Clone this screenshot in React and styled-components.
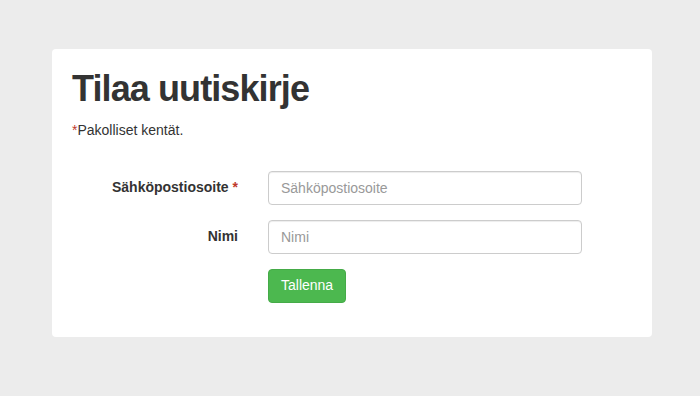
import React from "react";
import styled, { createGlobalStyle } from "styled-components";

const Global = createGlobalStyle`
  html, body { margin: 0; padding: 0; }
  body {
    background: #ececec;
    font-family: "Liberation Sans", Arial, Helvetica, sans-serif;
    font-size: 14px;
    line-height: 1.42857;
    color: #333;
  }
  * { box-sizing: border-box; }
`;

const Page = styled.div`
  width: 700px;
  height: 396px;
  padding: 49px 48px 0 52px;
`;

const Card = styled.div`
  width: 600px;
  background: #fff;
  border-radius: 4px;
  padding: 20px 20px 19px;
`;

const Title = styled.h1`
  margin: 0 0 12px;
  font-size: 36px;
  line-height: 1.1;
  font-weight: 700;
  letter-spacing: -0.9px;
  color: #333;
`;

const Note = styled.p`
  margin: 0;
`;

const Req = styled.span`
  color: #c0392b;
`;

const Form = styled.form`
  margin: 30px -15px 0;
`;

const Row = styled.div`
  display: grid;
  grid-template-columns: 196px 344px 1fr;
  margin-bottom: 15px;
`;

const Label = styled.label`
  grid-column: 1;
  padding: 7px 15px 0;
  text-align: right;
  font-weight: 700;
`;

const Field = styled.div`
  grid-column: 2;
  padding: 0 15px;
`;

const Input = styled.input`
  display: block;
  width: 100%;
  height: 34px;
  padding: 6px 12px;
  font: inherit;
  font-size: 14px;
  color: #555;
  background: #fff;
  border: 1px solid #ccc;
  border-radius: 4px;
  box-shadow: inset 0 1px 1px rgba(0, 0, 0, 0.075);
  outline: none;
  &::placeholder { color: #999; }
`;

const Button = styled.button`
  display: inline-block;
  height: 34px;
  padding: 6px 12px;
  font: inherit;
  font-size: 14px;
  color: #fff;
  background: #4cb84f;
  border: 1px solid #45ab48;
  border-radius: 4px;
  cursor: pointer;
`;

export default function App() {
  return (
    <>
      <Global />
      <Page>
        <Card>
          <Title>Tilaa uutiskirje</Title>
          <Note><Req>*</Req>Pakolliset kentät.</Note>
          <Form onSubmit={(e) => e.preventDefault()}>
            <Row>
              <Label htmlFor="email">Sähköpostiosoite <Req>*</Req></Label>
              <Field><Input id="email" type="email" placeholder="Sähköpostiosoite" /></Field>
            </Row>
            <Row>
              <Label htmlFor="name">Nimi</Label>
              <Field><Input id="name" type="text" placeholder="Nimi" /></Field>
            </Row>
            <Row>
              <Field><Button type="submit">Tallenna</Button></Field>
            </Row>
          </Form>
        </Card>
      </Page>
    </>
  );
}
